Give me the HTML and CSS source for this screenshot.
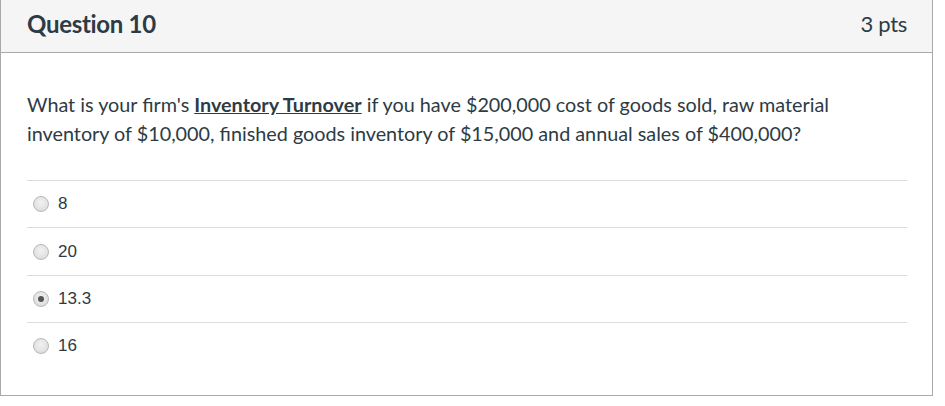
FILE: index.html
```html
<!DOCTYPE html>
<html>
<head>
<meta charset="utf-8">
<link rel="stylesheet" href="styles.css">
</head>
<body>
<div class="page">
  <div class="card">
    <div class="card-header">
      <h2 class="q-title">Question 10</h2>
      <span class="q-points">3 pts</span>
    </div>
    <div class="card-body">
      <p class="q-text">What is your firm's <strong class="term">Inventory Turnover</strong> if you have $200,000 cost of goods sold, raw material inventory of $10,000, finished goods inventory of $15,000 and annual sales of $400,000?</p>
      <div class="answers">
        <div class="answer"><span class="radio"></span><span class="answer-label">8</span></div>
        <div class="answer"><span class="radio"></span><span class="answer-label">20</span></div>
        <div class="answer"><span class="radio checked"></span><span class="answer-label">13.3</span></div>
        <div class="answer"><span class="radio"></span><span class="answer-label">16</span></div>
      </div>
    </div>
  </div>
</div>
</body>
</html>
```

FILE: styles.css
```css
html, body {
  margin: 0;
  padding: 0;
  background: #ffffff;
}

.page {
  padding: 0 12px 10px 0;
}

.card {
  border: 1px solid #aaaaaa;
  border-top: none;
  background: #ffffff;
  color: #2d3b45;
  font-family: Lato, "Open Sans", sans-serif;
}

.card-header {
  display: flex;
  justify-content: space-between;
  align-items: center;
  box-sizing: border-box;
  height: 53px;
  padding: 0 25px 6px 26px;
  background: #f5f5f5;
  border-bottom: 1px solid #aaaaaa;
}

.q-title {
  margin: 0;
  font-size: 24px;
  font-weight: 700;
  letter-spacing: -0.3px;
}

.q-points {
  font-size: 22px;
  font-weight: 400;
  letter-spacing: -0.3px;
}

.card-body {
  padding: 37px 25px 25px 26px;
}

.q-text {
  margin: 0 0 33px 0;
  font-size: 19.8px;
  line-height: 28.5px;
}

.term {
  font-weight: 700;
  text-decoration: underline;
}

.answers {
  display: flex;
  flex-direction: column;
}

.answer {
  display: flex;
  align-items: center;
  box-sizing: border-box;
  height: 47.4px;
  border-top: 1px solid #dddddd;
  padding-left: 6px;
  gap: 9px;
}

.radio {
  width: 14px;
  height: 14px;
  border-radius: 50%;
  border: 1px solid #b8b8b8;
  background: radial-gradient(circle at 50% 40%, #f2f2f2 0%, #e2e2e2 60%, #d4d4d4 100%);
  position: relative;
  flex: none;
}

.radio.checked::after {
  content: "";
  position: absolute;
  left: 4px;
  top: 4px;
  width: 6px;
  height: 6px;
  border-radius: 50%;
  background: #555555;
}

.answer-label {
  font-family: "Liberation Sans", Arial, sans-serif;
  font-size: 17px;
  color: #2d3b45;
}
```
